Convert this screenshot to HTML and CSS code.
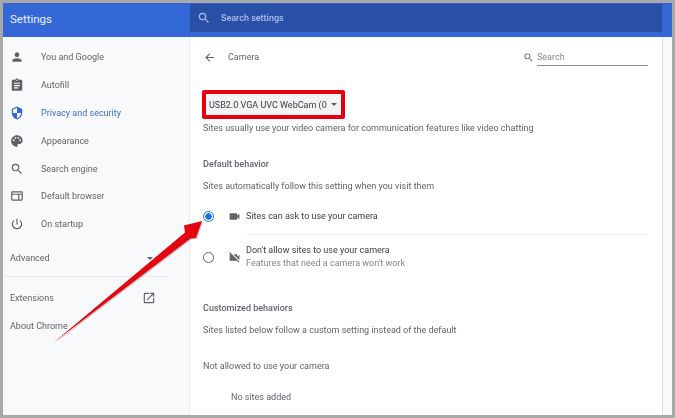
FILE: index.html
```html
<!DOCTYPE html>
<html lang="en">
<head>
    <meta charset="UTF-8">
    <title>Settings - Camera</title>
    <link rel="stylesheet" href="styles.css">
</head>
<body>
    <div class="window">
        <header class="topbar">
            <div class="brand">Settings</div>
            <div class="search-settings">
                <svg class="icon" viewBox="0 0 24 24"><path fill="#a8c0f0" d="M15.5 14h-.79l-.28-.27A6.47 6.47 0 0 0 16 9.5 6.5 6.5 0 1 0 9.5 16c1.61 0 3.09-.59 4.23-1.57l.27.28v.79l5 4.99L20.49 19l-4.99-5zm-6 0C7 14 5 12 5 9.5S7 5 9.5 5 14 7 14 9.500 12 14 9.500 14z"/></svg>
                <span>Search settings</span>
            </div>
        </header>
        <div class="main">
            <nav class="sidebar">
                <a class="nav-item">
                    <svg class="icon" viewBox="0 0 24 24"><path d="M12 12c2.200 0 4-1.800 4-4s-1.800-4-4-4-4 1.800-4 4 1.800 4 4 4zm0 2c-2.700 0-8 1.300-8 4v2h16v-2c0-2.700-5.300-4-8-4z"/></svg>
                    You and Google
                </a>
                <a class="nav-item">
                    <svg class="icon" viewBox="0 0 24 24"><path d="M19 3h-4.200C14.400 1.800 13.300 1 12 1s-2.400.8-2.800 2H5c-1.100 0-2 .9-2 2v15c0 1.100.9 2 2 2h14c1.100 0 2-.9 2-2V5c0-1.100-.9-2-2-2zm-7 0c.6 0 1 .4 1 1s-.4 1-1 1-1-.4-1-1 .4-1 1-1zm2 15H7v-2h7v2zm3-4H7v-2h10v2zm0-4H7V8h10v2z"/></svg>
                    Autofill
                </a>
                <a class="nav-item active">
                    <svg class="icon" viewBox="0 0 24 24"><path fill="#3367d6" d="M12 1 3 5v6c0 5.600 3.800 10.700 9 12 5.200-1.300 9-6.400 9-12V5l-9-4zm0 11h7c-.5 4.100-3.300 7.800-7 8.900V12H5V6.300l7-3.100V12z"/></svg>
                    Privacy and security
                </a>
                <a class="nav-item">
                    <svg class="icon" viewBox="0 0 24 24"><path d="M12 2C6.500 2 2 6.500 2 12s4.500 10 10 10c.9 0 1.500-.7 1.500-1.500 0-.4-.2-.8-.4-1-.3-.3-.4-.6-.4-1 0-.9.7-1.500 1.500-1.500H16c3.100 0 5.600-2.500 5.600-5.600C22 6 17.500 2 12 2zM6.500 12a1.500 1.500 0 1 1 0-3 1.500 1.500 0 0 1 0 3zm3-4a1.500 1.500 0 1 1 0-3 1.500 1.500 0 0 1 0 3zm5 0a1.500 1.500 0 1 1 0-3 1.500 1.500 0 0 1 0 3zm3 4a1.500 1.500 0 1 1 0-3 1.500 1.500 0 0 1 0 3z"/></svg>
                    Appearance
                </a>
                <a class="nav-item">
                    <svg class="icon" viewBox="0 0 24 24"><path d="M15.500 14h-.79l-.28-.27A6.470 6.470 0 0 0 16 9.500 6.500 6.500 0 1 0 9.500 16c1.610 0 3.090-.59 4.230-1.570l.27.28v.79l5 4.990L20.490 19l-4.990-5zm-6 0C7 14 5 12 5 9.500S7 5 9.500 5 14 7 14 9.500 12 14 9.500 14z"/></svg>
                    Search engine
                </a>
                <a class="nav-item">
                    <svg class="icon" viewBox="0 0 24 24"><path d="M20 4H4c-1.100 0-2 .9-2 2v12c0 1.100.9 2 2 2h16c1.100 0 2-.9 2-2V6c0-1.100-.9-2-2-2zM4 18v-8h10v8H4zm16 0h-4v-8h4v8zm0-10H4V6h16v2z"/></svg>
                    Default browser
                </a>
                <a class="nav-item">
                    <svg class="icon" viewBox="0 0 24 24"><path d="M13 3h-2v10h2V3zm4.800 2.200-1.400 1.400A7 7 0 1 1 7.600 6.600L6.200 5.200A9 9 0 1 0 17.800 5.200z"/></svg>
                    On startup
                </a>
                <a class="nav-section advanced">
                    Advanced
                    <span class="caret"></span>
                </a>
                <div class="nav-divider"></div>
                <a class="nav-section">
                    Extensions
                    <svg class="icon ext-icon" viewBox="0 0 24 24"><path d="M19 19H5V5h7V3H5a2 2 0 0 0-2 2v14a2 2 0 0 0 2 2h14c1.100 0 2-.9 2-2v-7h-2v7zM14 3v2h3.600l-9.800 9.800 1.400 1.400L19 6.400V10h2V3h-7z"/></svg>
                </a>
                <a class="nav-section">About Chrome</a>
            </nav>
            <main class="content">
                <div class="subpage-head">
                    <svg class="icon back" viewBox="0 0 24 24"><path d="M20 11H7.800l5.600-5.600L12 4l-8 8 8 8 1.400-1.400L7.800 13H20v-2z"/></svg>
                    <span class="subpage-title">Camera</span>
                    <svg class="icon small-search" viewBox="0 0 24 24"><path d="M15.500 14h-.79l-.28-.27A6.470 6.470 0 0 0 16 9.500 6.500 6.500 0 1 0 9.500 16c1.610 0 3.090-.59 4.230-1.570l.27.28v.79l5 4.990L20.490 19l-4.990-5zm-6 0C7 14 5 12 5 9.500S7 5 9.500 5 14 7 14 9.500 12 14 9.500 14z"/></svg>
                    <span class="page-search">Search</span>
                </div>
                <div class="device-select">USB2.0 VGA UVC WebCam (0<span class="caret"></span></div>
                <p class="desc first">Sites usually use your video camera for communication features like video chatting</p>
                <h2 class="heading">Default behavior</h2>
                <p class="desc follow">Sites automatically follow this setting when you visit them</p>
                <div class="option checked">
                    <span class="radio"></span>
                    <svg class="icon cam" viewBox="0 0 24 24"><path d="M17 10.500V7c0-.6-.4-1-1-1H4c-.6 0-1 .4-1 1v10c0 .6.4 1 1 1h12c.6 0 1-.4 1-1v-3.500l4 4v-11l-4 4z"/></svg>
                    <div class="option-text">Sites can ask to use your camera</div>
                </div>
                <div class="option blocked">
                    <span class="radio"></span>
                    <svg class="icon cam" viewBox="0 0 24 24"><path d="M21 6.500l-4 4V7c0-.6-.4-1-1-1H9.800L21 17.200V6.500zM3.300 2 2 3.300 4.700 6H4c-.6 0-1 .4-1 1v10c0 .6.4 1 1 1h12c.2 0 .4-.1.5-.2l3.200 3.200 1.300-1.300L3.300 2z"/></svg>
                    <div class="option-text">
                        Don't allow sites to use your camera
                        <div class="option-sub">Features that need a camera won't work</div>
                    </div>
                </div>
                <h2 class="heading custom">Customized behaviors</h2>
                <p class="desc follow">Sites listed below follow a custom setting instead of the default</p>
                <p class="desc not-allowed">Not allowed to use your camera</p>
                <p class="desc no-sites">No sites added</p>
            </main>
            <div class="scroll-strip"></div>
        </div>
        <!-- annotation on top of the screenshot -->
        <svg class="arrow" viewBox="0 0 675 418">
            <path fill="#000" opacity="0.2" d="M54 344 L186 233.500 L185 226.500 L203 222 L197 239 L191.500 239.500 Z"/>
            <path fill="#e4060f" d="M53 343 L185 232.500 L184 225.500 L202 221 L196 238 L190.500 238.500 Z"/>
        </svg>
    </div>
</body>
</html>
```

FILE: styles.css
```css
* {
    box-sizing: border-box;
}
html, body {
    margin: 0;
    height: 100%;
}
body {
    font-family: Roboto, "Liberation Sans", sans-serif;
    font-size: 9px;
    color: #5f6368;
    background-color: #a8a8a8;
    overflow: hidden;
}
.window {
    height: 418px;
    padding: 3px;
    display: flex;
    flex-direction: column;
    filter: blur(0.3px);
}
.icon {
    width: 14px;
    height: 14px;
    fill: #5f6368;
    flex: none;
}

/* top bar */
.topbar {
    height: 34px;
    flex: none;
    display: flex;
    background-color: #3367d6;
    padding-top: 1px;
    padding-right: 10px;
}
.brand {
    width: 187px;
    padding: 8px 0 0 7px;
    color: #e8effc;
    font-size: 11.5px;
}
.search-settings {
    flex: 1;
    height: 28px;
    background-color: #2a4fa6;
    display: flex;
    align-items: center;
    padding-left: 7px;
    color: #a8c0f0;
    font-weight: 500;
}
.search-settings span {
    margin-left: 10px;
}

/* sidebar */
.main {
    flex: 1;
    display: flex;
    min-height: 0;
}
.sidebar {
    width: 187px;
    flex: none;
    background-color: #f8f9fa;
    border-right: 1px solid #e8eaed;
    padding-top: 6.5px;
}
.nav-item {
    height: 27.8px;
    display: flex;
    align-items: center;
    padding-left: 7px;
    gap: 17px;
}
.nav-item.active {
    color: #3f6cc0;
}
.nav-section {
    height: 28px;
    display: flex;
    align-items: center;
    padding-left: 7px;
}
.nav-section.advanced {
    height: 36px;
    margin-top: 2px;
}
.nav-section .caret {
    margin-left: 97px;
}
.nav-divider {
    height: 1px;
    background-color: #e8eaed;
    margin: 0 0 7px;
    width: 165px;
}
.ext-icon {
    margin-left: 88px;
}
.caret {
    display: inline-block;
    width: 0;
    height: 0;
    border-left: 3.5px solid transparent;
    border-right: 3.5px solid transparent;
    border-top: 3.5px solid #5f6368;
}

/* content */
.content {
    flex: 1;
    background-color: #fff;
    padding: 0 14px 0 13px;
    min-width: 0;
}
.subpage-head {
    display: flex;
    align-items: center;
    height: 40px;
}
.back {
    width: 13px;
    height: 13px;
}
.subpage-title {
    margin-left: 12px;
}
.small-search {
    margin-left: auto;
    width: 11px;
    height: 11px;
}
.page-search {
    width: 111px;
    margin-left: 3px;
    margin-top: 4px;
    padding-bottom: 3px;
    border-bottom: 1px solid #8a8d91;
    color: #80868b;
}
.device-select {
    width: 143px;
    height: 29px;
    margin-top: 13px;
    margin-left: -1px;
    border: 4px solid #e3000f;
    border-radius: 2px;
    background-color: #f1f3f4;
    display: flex;
    align-items: center;
    padding-left: 3px;
    color: #3c4043;
}
.device-select .caret {
    margin-left: 4px;
}
.desc {
    margin: 0;
    line-height: 12px;
}
.desc.first {
    margin-top: 3px;
}
.desc.follow {
    margin-top: 10px;
}
.heading {
    margin: 0;
    font-size: 9px;
    font-weight: 500;
    line-height: 12px;
}
.desc.first + .heading {
    margin-top: 24px;
}
.heading.custom {
    margin-top: 23px;
}
.option {
    display: flex;
    align-items: center;
    color: #3c4043;
}
.option.checked {
    height: 38px;
    margin-top: 5px;
}
.option.blocked {
    height: 44px;
}
.option-text {
    flex: 1;
    line-height: 13px;
    margin-left: 5px;
}
.option.checked .option-text {
    height: 38px;
    line-height: 38px;
    border-bottom: 1px solid #eceef0;
}
.option-sub {
    color: #80868b;
}
.radio {
    width: 11px;
    height: 11px;
    margin-right: 14px;
    border: 1.5px solid #5f6368;
    border-radius: 50%;
    flex: none;
}
.checked .radio {
    border-color: #1a73e8;
    background: radial-gradient(circle, #1a73e8 0, #1a73e8 3px, #fff 3.4px);
}
.cam {
    width: 13px;
    height: 13px;
}
.not-allowed {
    margin-top: 24px;
}
.no-sites {
    margin-top: 19px;
    padding-left: 28px;
}
.scroll-strip {
    width: 10px;
    flex: none;
    background-color: #f8f9fa;
    border-left: 1px solid #dfe1e5;
}

/* red arrow annotation */
.arrow {
    position: absolute;
    left: 0;
    top: 0;
    width: 675px;
    height: 418px;
    pointer-events: none;
}
```
